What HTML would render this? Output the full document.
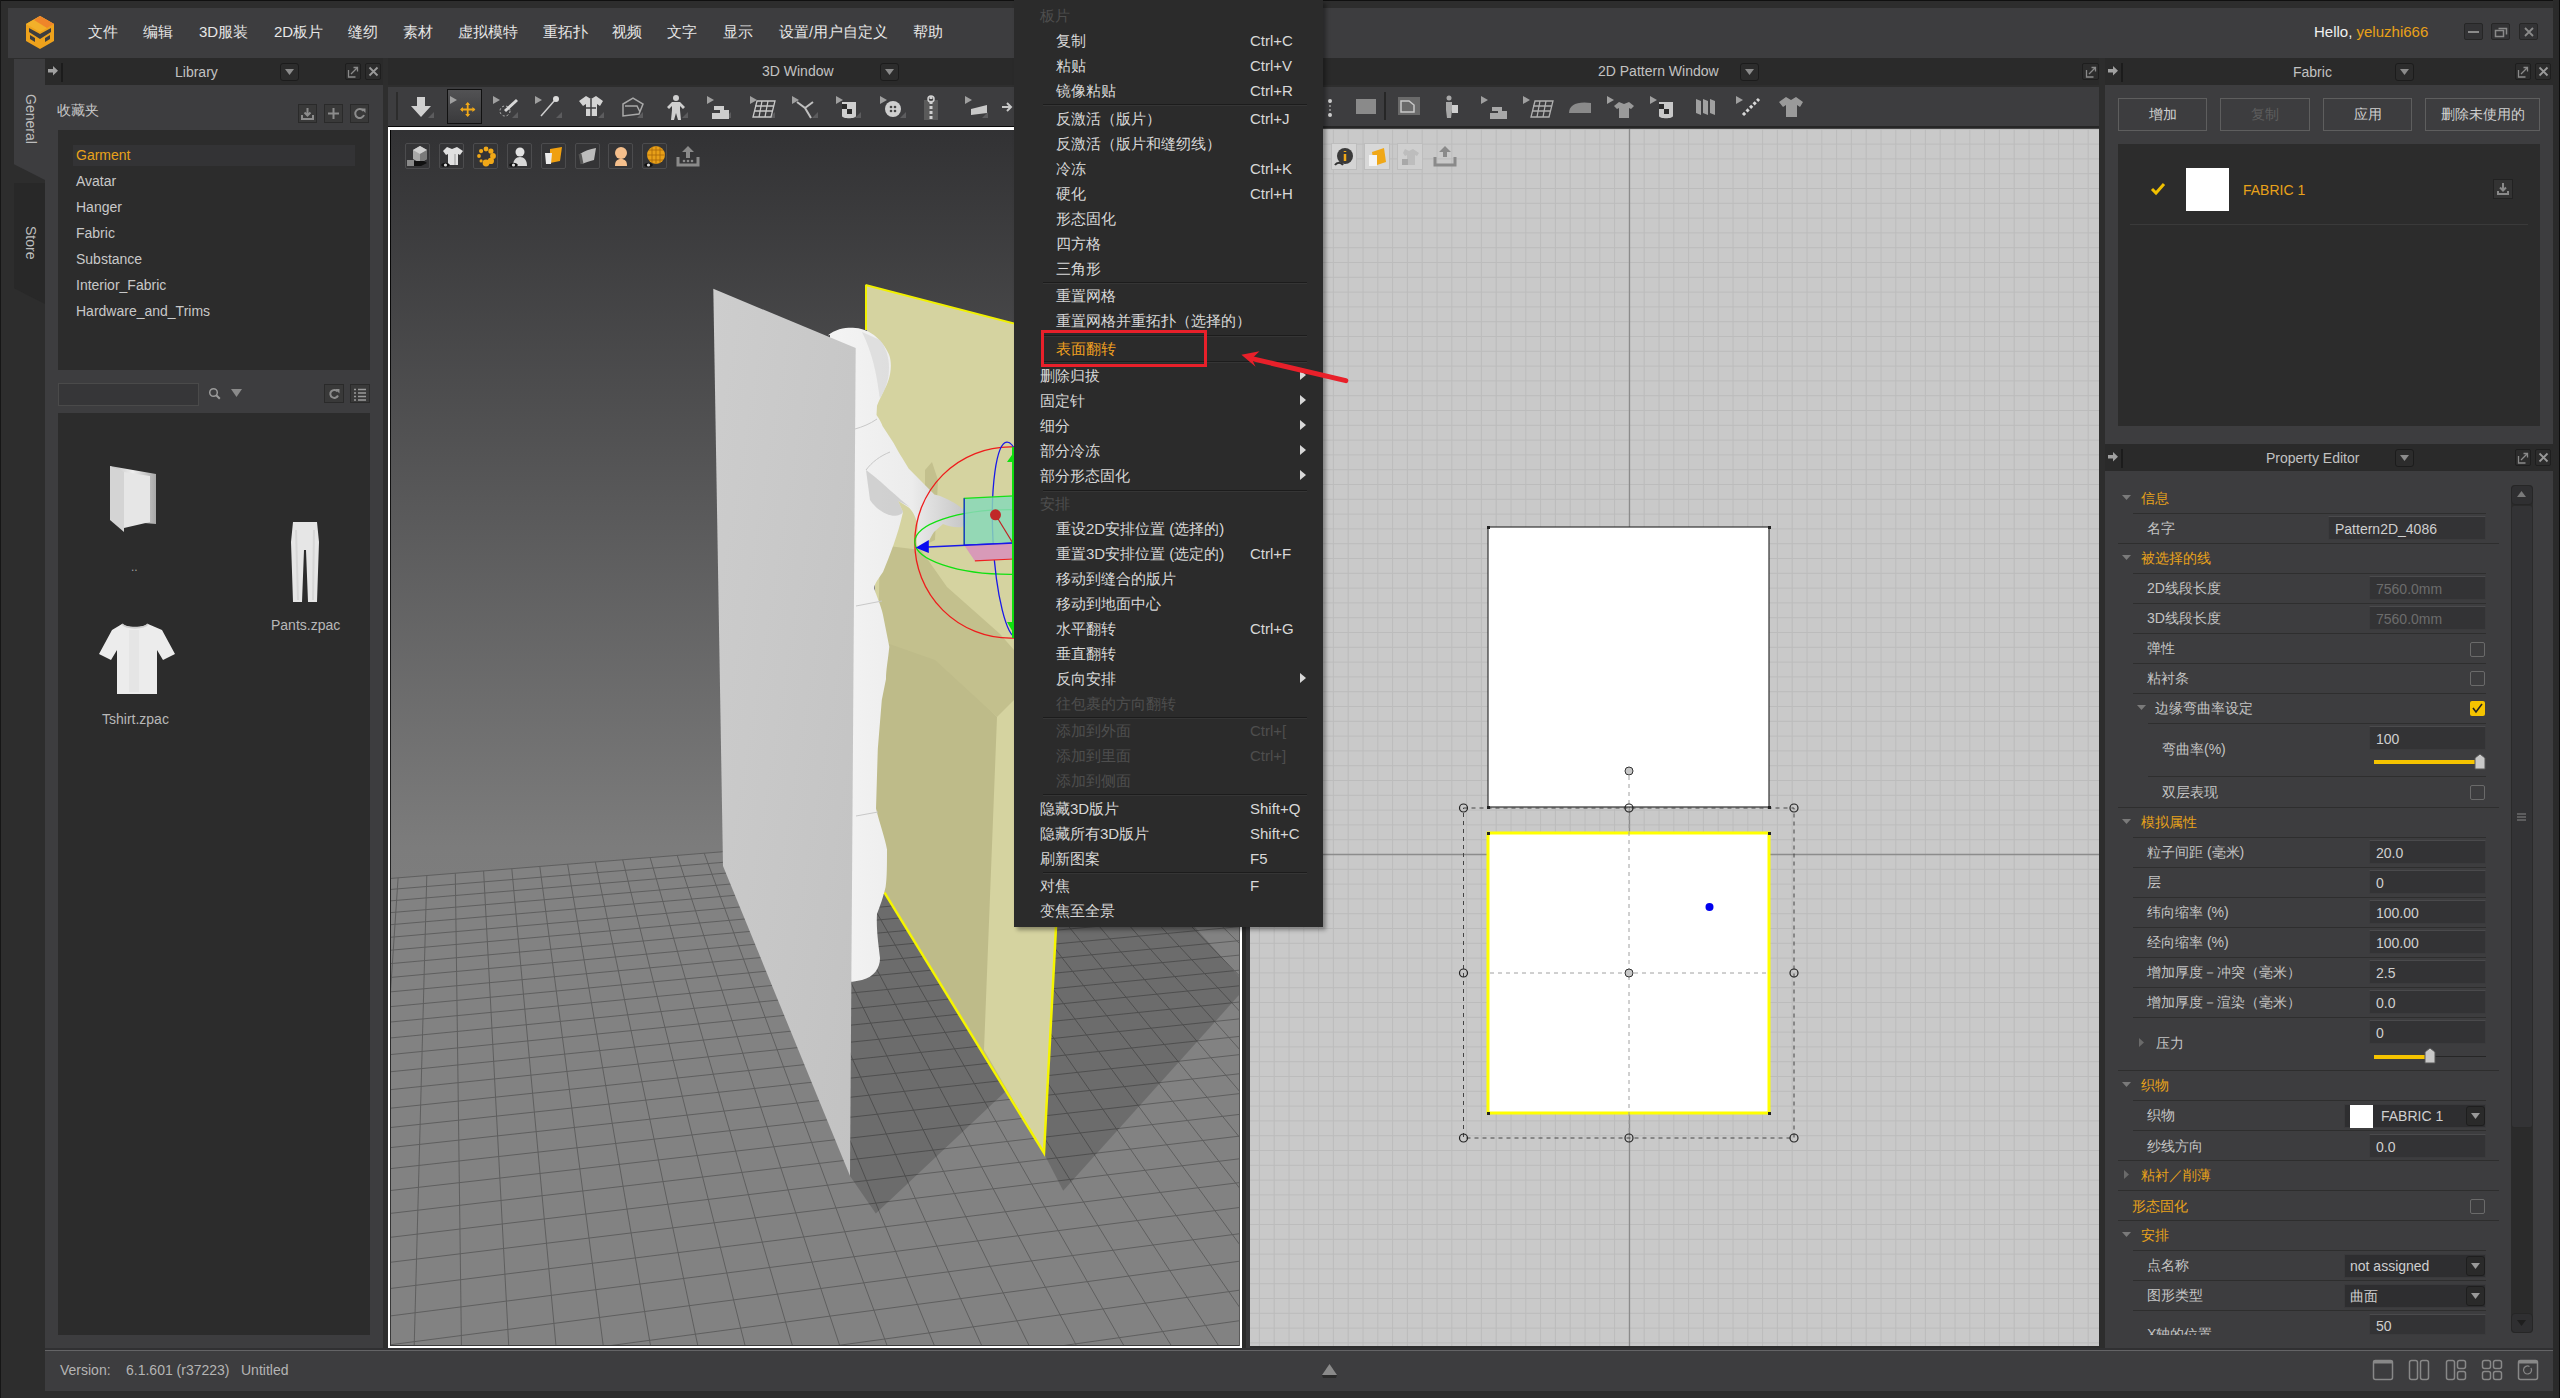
<!DOCTYPE html><html><head><meta charset="utf-8"><style>
*{box-sizing:border-box;margin:0;padding:0}
html,body{width:2560px;height:1398px;overflow:hidden;background:#2d2d2d;font-family:"Liberation Sans",sans-serif;color:#cfcfcf}
.a{position:absolute}
.t{position:absolute;white-space:nowrap;line-height:1}
svg{position:absolute;overflow:visible}
</style></head><body>
<div class="a" style="left:0px;top:0px;width:2560px;height:1px;background:#101010;"></div>
<div class="a" style="left:0px;top:0px;width:1px;height:1398px;background:#161616;"></div>
<div class="a" style="left:2553px;top:0px;width:6px;height:1398px;background:#2a2a2a;"></div>
<div class="a" style="left:2559px;top:0px;width:1px;height:1398px;background:#0e0e0e;"></div>
<div class="a" style="left:8px;top:8px;width:2545px;height:50px;background:#3d3d3f;"></div>
<div class="t" style="left:88px;top:23.5px;font-size:15px;color:#e6e6e6;">文件</div>
<div class="t" style="left:143px;top:23.5px;font-size:15px;color:#e6e6e6;">编辑</div>
<div class="t" style="left:199px;top:23.5px;font-size:15px;color:#e6e6e6;">3D服装</div>
<div class="t" style="left:274px;top:23.5px;font-size:15px;color:#e6e6e6;">2D板片</div>
<div class="t" style="left:348px;top:23.5px;font-size:15px;color:#e6e6e6;">缝纫</div>
<div class="t" style="left:403px;top:23.5px;font-size:15px;color:#e6e6e6;">素材</div>
<div class="t" style="left:458px;top:23.5px;font-size:15px;color:#e6e6e6;">虚拟模特</div>
<div class="t" style="left:543px;top:23.5px;font-size:15px;color:#e6e6e6;">重拓扑</div>
<div class="t" style="left:612px;top:23.5px;font-size:15px;color:#e6e6e6;">视频</div>
<div class="t" style="left:667px;top:23.5px;font-size:15px;color:#e6e6e6;">文字</div>
<div class="t" style="left:723px;top:23.5px;font-size:15px;color:#e6e6e6;">显示</div>
<div class="t" style="left:779px;top:23.5px;font-size:15px;color:#e6e6e6;">设置/用户自定义</div>
<div class="t" style="left:913px;top:23.5px;font-size:15px;color:#e6e6e6;">帮助</div>
<svg style="left:24px;top:15px" width="32" height="36" viewBox="0 0 32 36">
<polygon points="16,1 30,9 30,26 16,34 2,26 2,9" fill="#eea21c"/>
<polygon points="16,1 30,9 16,17 2,9" fill="#f2b02a"/>
<polygon points="16,1 30,9 23,13 10,5" fill="#ee7a2a" opacity=".8"/>
<polygon points="5,13 16,19 27,13 27,17 16,24 5,17" fill="#3d3d3f"/>
<polygon points="6,20 11,23 11,27 6,24" fill="#3d3d3f"/>
<polygon points="26,20 21,23 21,27 26,24" fill="#3d3d3f"/>
</svg>
<div class="t" style="left:2314px;top:23.5px;font-size:15px;color:#f0f0f0;">Hello, <span style="color:#e9a118">yeluzhi666</span></div>
<div class="a" style="left:2464px;top:23px;width:19px;height:17px;background:#333335;border:1px solid #262626;border-radius:2px"></div>
<div class="a" style="left:2491px;top:23px;width:19px;height:17px;background:#333335;border:1px solid #262626;border-radius:2px"></div>
<div class="a" style="left:2519px;top:23px;width:19px;height:17px;background:#333335;border:1px solid #262626;border-radius:2px"></div>
<div class="a" style="left:2468px;top:31px;width:11px;height:2px;background:#8a8a8a;"></div>
<svg style="left:2494px;top:25px" width="14" height="14"><rect x="1.5" y="5.5" width="8" height="6" fill="none" stroke="#8a8a8a" stroke-width="1.5"/><path d="M4.5 3.5h8v6" fill="none" stroke="#8a8a8a" stroke-width="1.5"/></svg>
<svg style="left:2522px;top:25px" width="14" height="14"><path d="M3 3L11 11M11 3L3 11" stroke="#8a8a8a" stroke-width="1.8"/></svg>
<div class="a" style="left:14px;top:59px;width:31px;height:121px;background:#3d3d3f;clip-path:polygon(0 0,100% 0,100% 100%,0 87%)"></div>
<div class="a" style="left:14px;top:183px;width:31px;height:121px;background:#282828;clip-path:polygon(0 0,100% 0,100% 100%,0 87%)"></div>
<div class="t" style="left:6px;top:112.0px;font-size:14px;color:#bdbdbd;transform:rotate(90deg);transform-origin:50% 50%;width:50px">General</div>
<div class="t" style="left:13px;top:237.0px;font-size:14px;color:#bdbdbd;transform:rotate(90deg);transform-origin:50% 50%;width:36px">Store</div>
<div class="a" style="left:45px;top:58px;width:338px;height:27px;background:#2a2a2a;"></div>
<svg style="left:47px;top:66px" width="14" height="12"><path d="M1 3h5V0l5 4.75-5 4.75V6.5H1z" fill="#a0a0a0"/></svg>
<div class="a" style="left:61px;top:63px;width:2px;height:19px;background:#1c1c1c;"></div>
<div class="t" style="left:175px;top:64.5px;font-size:14px;color:#c2c2c2;">Library</div>
<div class="a" style="left:280px;top:63px;width:19px;height:18px;background:#2c2c2c;border:1px solid #1c1c1c;border-radius:3px"></div>
<svg style="left:285px;top:69px" width="9" height="6"><path d="M0 0h9L4.5 6z" fill="#8c8c8c"/></svg>
<div class="a" style="left:345px;top:63px;width:16px;height:17px;background:#2c2c2c;border:1px solid #1e1e1e;border-radius:2px"></div>
<svg style="left:347px;top:66px" width="12" height="12"><path d="M1.5 4v7h7M4 8l6-6M6.5 1.5h4v4" fill="none" stroke="#8a8a8a" stroke-width="1.3"/></svg>
<div class="a" style="left:365px;top:63px;width:16px;height:17px;background:#2c2c2c;border:1px solid #1e1e1e;border-radius:2px"></div>
<svg style="left:368px;top:66px" width="11" height="11"><path d="M1.5 1.5l8 8M9.5 1.5l-8 8" stroke="#9a9a9a" stroke-width="1.8"/></svg>
<div class="a" style="left:45px;top:85px;width:338px;height:1264px;background:#3d3d3f;"></div>
<div class="a" style="left:383px;top:85px;width:5px;height:1264px;background:#2e2e2e;"></div>
<div class="t" style="left:57px;top:103.0px;font-size:14px;color:#c8c8c8;">收藏夹</div>
<div class="a" style="left:298px;top:104px;width:19px;height:19px;background:#393939;border:1px solid #2a2a2a"></div>
<div class="a" style="left:324px;top:104px;width:19px;height:19px;background:#393939;border:1px solid #2a2a2a"></div>
<div class="a" style="left:350px;top:104px;width:19px;height:19px;background:#393939;border:1px solid #2a2a2a"></div>
<svg style="left:300px;top:106px" width="15" height="15"><path d="M7.5 2v7M4.5 6.5l3 3 3-3M2 9v4h11V9" fill="none" stroke="#8c8c8c" stroke-width="2"/></svg>
<svg style="left:326px;top:106px" width="15" height="15"><path d="M7.5 2v11M2 7.5h11" stroke="#8c8c8c" stroke-width="2"/></svg>
<svg style="left:352px;top:106px" width="15" height="15"><path d="M11.5 5A4.5 4.5 0 1 0 12 9" fill="none" stroke="#8c8c8c" stroke-width="2"/><path d="M9 2.5h4.5V7z" fill="#8c8c8c"/></svg>
<div class="a" style="left:58px;top:130px;width:312px;height:240px;background:#2c2c2c;"></div>
<div class="a" style="left:73px;top:145px;width:282px;height:21px;background:#333335;"></div>
<div class="t" style="left:76px;top:148.0px;font-size:14px;color:#e8a21a;">Garment</div>
<div class="t" style="left:76px;top:174.0px;font-size:14px;color:#c8c8c8;">Avatar</div>
<div class="t" style="left:76px;top:200.0px;font-size:14px;color:#c8c8c8;">Hanger</div>
<div class="t" style="left:76px;top:226.0px;font-size:14px;color:#c8c8c8;">Fabric</div>
<div class="t" style="left:76px;top:252.0px;font-size:14px;color:#c8c8c8;">Substance</div>
<div class="t" style="left:76px;top:278.0px;font-size:14px;color:#c8c8c8;">Interior_Fabric</div>
<div class="t" style="left:76px;top:304.0px;font-size:14px;color:#c8c8c8;">Hardware_and_Trims</div>
<div class="a" style="left:58px;top:383px;width:141px;height:23px;background:#363638;border:1px solid #4a4a4a"></div>
<svg style="left:208px;top:387px" width="14" height="14"><circle cx="5.5" cy="5.5" r="3.8" fill="none" stroke="#9a9a9a" stroke-width="1.5"/><path d="M8.3 8.3l3.5 3.5" stroke="#9a9a9a" stroke-width="2"/></svg>
<svg style="left:231px;top:389px" width="12" height="9"><path d="M0 0h11L5.5 8z" fill="#8a8a8a"/></svg>
<div class="a" style="left:324px;top:384px;width:20px;height:19px;background:#393939;border:1px solid #2a2a2a"></div>
<div class="a" style="left:350px;top:384px;width:20px;height:19px;background:#393939;border:1px solid #2a2a2a"></div>
<svg style="left:327px;top:387px" width="14" height="14"><path d="M10.5 4.5A4 4 0 1 0 11 8.5" fill="none" stroke="#8c8c8c" stroke-width="2"/><path d="M8 2h4.5v4.5z" fill="#8c8c8c"/></svg>
<svg style="left:353px;top:387px" width="14" height="14"><path d="M1 2.5h2M5 2.5h8M1 6h2M5 6h8M1 9.5h2M5 9.5h8M1 13h2M5 13h8" stroke="#9a9a9a" stroke-width="1.6"/></svg>
<div class="a" style="left:58px;top:413px;width:312px;height:922px;background:#2c2c2c;"></div>
<svg style="left:108px;top:462px" width="52" height="72">
<defs><linearGradient id="fg" x1="0" x2="1"><stop offset="0" stop-color="#bdbdbd"/><stop offset=".5" stop-color="#eeeeee"/><stop offset="1" stop-color="#a8a8a8"/></linearGradient></defs>
<polygon points="2,4 48,12 48,62 2,58" fill="url(#fg)"/>
<polygon points="2,4 16,10 16,70 2,58" fill="#d4d4d4"/>
<polygon points="16,10 42,14 42,60 16,66" fill="#e6e6e6"/>
</svg>
<div class="t" style="left:131px;top:561.0px;font-size:12px;color:#a0a0a0;">..</div>
<svg style="left:288px;top:520px" width="34" height="84">
<path d="M5 2h24l2 20-2 60h-9l-2-52h-2l-2 52H5L3 22z" fill="#e6e6e6"/>
<path d="M8 10l2 70M26 10l-1 70" stroke="#d2d2d2" stroke-width="2" opacity=".7"/>
</svg>
<div class="t" style="left:271px;top:618.0px;font-size:14px;color:#b8b8b8;">Pants.zpac</div>
<svg style="left:94px;top:622px" width="82" height="72">
<path d="M28 2c4 4 22 4 26 0l14 6 13 24-12 6-6-10 0 44H23V28l-6 10-12-6L18 8z" fill="#ececec"/>
<path d="M28 2c4 5 22 5 26 0" fill="none" stroke="#cfcfcf" stroke-width="2"/>
<path d="M40 8v62" stroke="#e2e2e2" stroke-width="10" opacity=".6"/>
</svg>
<div class="t" style="left:102px;top:712.0px;font-size:14px;color:#b8b8b8;">Tshirt.zpac</div>
<div class="a" style="left:388px;top:58px;width:852px;height:27px;background:#2a2a2a;"></div>
<div class="t" style="left:762px;top:64.0px;font-size:14px;color:#c2c2c2;">3D Window</div>
<div class="a" style="left:880px;top:63px;width:19px;height:18px;background:#2c2c2c;border:1px solid #1c1c1c;border-radius:3px"></div>
<svg style="left:885px;top:69px" width="9" height="6"><path d="M0 0h9L4.5 6z" fill="#8c8c8c"/></svg>
<div class="a" style="left:388px;top:85px;width:852px;height:2px;background:#2e2e2e;"></div>
<div class="a" style="left:388px;top:87px;width:852px;height:40px;background:#3d3d3f;"></div>
<div class="a" style="left:396px;top:92px;width:2px;height:28px;background:#2c2c2c;"></div>
<div class="a" style="left:447px;top:89px;width:35px;height:35px;background:#444446;border:1px solid #111;background:linear-gradient(#525254,#3a3a3c)"></div>
<svg style="left:428px;top:112px" width="6" height="6"><path d="M6 0V6H0z" fill="#5c5c5e"/></svg>
<svg style="left:512px;top:112px" width="6" height="6"><path d="M6 0V6H0z" fill="#5c5c5e"/></svg>
<svg style="left:556px;top:112px" width="6" height="6"><path d="M6 0V6H0z" fill="#5c5c5e"/></svg>
<svg style="left:598px;top:112px" width="6" height="6"><path d="M6 0V6H0z" fill="#5c5c5e"/></svg>
<svg style="left:637px;top:112px" width="6" height="6"><path d="M6 0V6H0z" fill="#5c5c5e"/></svg>
<svg style="left:682px;top:112px" width="6" height="6"><path d="M6 0V6H0z" fill="#5c5c5e"/></svg>
<svg style="left:725px;top:112px" width="6" height="6"><path d="M6 0V6H0z" fill="#5c5c5e"/></svg>
<svg style="left:769px;top:112px" width="6" height="6"><path d="M6 0V6H0z" fill="#5c5c5e"/></svg>
<svg style="left:812px;top:112px" width="6" height="6"><path d="M6 0V6H0z" fill="#5c5c5e"/></svg>
<svg style="left:855px;top:112px" width="6" height="6"><path d="M6 0V6H0z" fill="#5c5c5e"/></svg>
<svg style="left:900px;top:112px" width="6" height="6"><path d="M6 0V6H0z" fill="#5c5c5e"/></svg>
<svg style="left:982px;top:112px" width="6" height="6"><path d="M6 0V6H0z" fill="#5c5c5e"/></svg>
<svg style="left:409px;top:96px" width="24" height="22"><path d="M8 1h8v9h6L12 21 2 10h6z" fill="#d0d0d0"/></svg>
<svg style="left:460px;top:102px" width="16" height="16"><path d="M7.7 1v13M1 7.5h13.4" stroke="#f0a818" stroke-width="1.8"/><path d="M7.7 0l-2.5 3h5zM7.7 15l-2.5-3h5zM0 7.5l3-2.5v5zM15.4 7.5l-3-2.5v5z" fill="#f0a818"/></svg>
<svg style="left:450px;top:96px" width="8" height="9"><path d="M0 0v8l7-4z" fill="#a0a0a0"/></svg>
<svg style="left:493px;top:96px" width="8" height="9"><path d="M0 0v8l7-4z" fill="#a0a0a0"/></svg>
<svg style="left:535px;top:96px" width="8" height="9"><path d="M0 0v8l7-4z" fill="#a0a0a0"/></svg>
<svg style="left:707px;top:96px" width="8" height="9"><path d="M0 0v8l7-4z" fill="#a0a0a0"/></svg>
<svg style="left:750px;top:96px" width="8" height="9"><path d="M0 0v8l7-4z" fill="#a0a0a0"/></svg>
<svg style="left:792px;top:96px" width="8" height="9"><path d="M0 0v8l7-4z" fill="#a0a0a0"/></svg>
<svg style="left:836px;top:96px" width="8" height="9"><path d="M0 0v8l7-4z" fill="#a0a0a0"/></svg>
<svg style="left:880px;top:96px" width="8" height="9"><path d="M0 0v8l7-4z" fill="#a0a0a0"/></svg>
<svg style="left:965px;top:96px" width="8" height="9"><path d="M0 0v8l7-4z" fill="#a0a0a0"/></svg>
<svg style="left:497px;top:96px" width="24" height="24"><circle cx="8" cy="15" r="5" fill="none" stroke="#b8b8b8" stroke-dasharray="2 2"/><path d="M8 15L20 4" stroke="#d8d8d8" stroke-width="3"/></svg>
<svg style="left:537px;top:94px" width="24" height="26"><path d="M4 22L18 6" stroke="#cfcfcf" stroke-width="1.5"/><circle cx="19" cy="5" r="3" fill="#dcdcdc"/></svg>
<svg style="left:578px;top:95px" width="26" height="24"><path d="M8 1l5 3 5-3 7 5-3 5-3-2v12H8V9L5 11 1 6z" fill="#d4d4d4"/><path d="M13 4v18M8 13h10" stroke="#3d3d3f" stroke-width="1.5"/></svg>
<svg style="left:621px;top:96px" width="24" height="22"><path d="M2 20V8l10-6 10 6-4 10zM4 10h12l3 6" fill="none" stroke="#a8a8a8" stroke-width="1.5"/></svg>
<svg style="left:665px;top:94px" width="22" height="26"><circle cx="11" cy="4" r="3" fill="#cfcfcf"/><path d="M7 8h8l5 5-2 2-3-3v4l1 10h-3l-2-7-2 7H6l1-10v-4l-3 3-2-2z" fill="#cfcfcf"/></svg>
<svg style="left:709px;top:98px" width="22" height="22"><path d="M5 8h10v4h5v9H3v-6h8v-3H5z" fill="#cdcdcd"/></svg>
<svg style="left:752px;top:100px" width="24" height="18"><path d="M5 1h18l-4 16H1zM3 6h19M2 11h19M10 1l-3 16M16 1l-3 16" fill="none" stroke="#c8c8c8" stroke-width="1.3"/></svg>
<svg style="left:795px;top:98px" width="22" height="22"><path d="M2 4l8 6 6 10M10 10l8-6" fill="none" stroke="#c0c0c0" stroke-width="2"/></svg>
<svg style="left:838px;top:96px" width="22" height="24"><path d="M4 6h14v14c0 3-14 3-14 0z" fill="#cfcfcf"/><path d="M4 8h5v5H4zM9 13h5v5H9z" fill="#2a2a2a"/></svg>
<svg style="left:882px;top:98px" width="22" height="22"><circle cx="11" cy="11" r="8" fill="#cfcfcf"/><circle cx="9" cy="9" r="1.3" fill="#444"/><circle cx="13" cy="9" r="1.3" fill="#444"/><circle cx="9" cy="13" r="1.3" fill="#444"/><circle cx="13" cy="13" r="1.3" fill="#444"/></svg>
<svg style="left:921px;top:94px" width="20" height="28"><rect x="3" y="6" width="14" height="20" fill="#5a5a5a"/><path d="M10 2v24" stroke="#d0d0d0" stroke-width="3" stroke-dasharray="3 2"/><circle cx="10" cy="5" r="3" fill="none" stroke="#d0d0d0" stroke-width="1.5"/></svg>
<svg style="left:967px;top:97px" width="24" height="22"><path d="M4 12l16-4v8L4 18z" fill="#c8c8c8"/></svg>
<svg style="left:1001px;top:101px" width="14" height="12"><path d="M1 6h8M6 2l4 4-4 4" fill="none" stroke="#c8c8c8" stroke-width="2"/></svg>
<div class="a" style="left:388px;top:126px;width:853px;height:1px;background:#0a0a0a;"></div>
<div class="a" style="left:388px;top:127px;width:854px;height:1221px;background:#ffffff;"></div>
<div class="a" style="left:390px;top:130px;width:1px;height:1216px;background:#050505;background:linear-gradient(#000,#3a3a3a)"></div>
<div class="a" style="left:390px;top:1345px;width:850px;height:1px;background:#3a3a3a;"></div>
<div class="a" style="left:1239px;top:130px;width:1px;height:1216px;background:#5a5a5a;"></div>
<svg style="left:391px;top:130px" width="848" height="1215" viewBox="1 0 848 1215">
<defs>
<linearGradient id="bg3" x1="0" y1="0" x2="0" y2="1"><stop offset="0" stop-color="#323234"/><stop offset=".59" stop-color="#7c7c7c"/><stop offset="1" stop-color="#8a8a8a"/></linearGradient>
<clipPath id="vc"><rect x="1" y="0" width="848" height="1215"/></clipPath>
<linearGradient id="gp" x1="0" y1="0" x2="1" y2="1"><stop offset="0" stop-color="#cdcdcd"/><stop offset="1" stop-color="#c2c2c2"/></linearGradient>
<linearGradient id="av" x1="0" y1="0" x2="1" y2="0"><stop offset="0" stop-color="#f4f4f4"/><stop offset=".6" stop-color="#ececec"/><stop offset="1" stop-color="#c4c4c4"/></linearGradient>
</defs>
<g clip-path="url(#vc)">
<rect x="0" y="0" width="849" height="1215" fill="url(#bg3)"/>
<polygon points="-49.8,752.5 1483.3,629.2 2761.3,1167.6 -187.7,1696.2" fill="#828282"/>
<path d="M-187.7 1696.2L-49.8 752.5M-120.1 1684.1L-20.8 750.1M-53.4 1672.1L8.1 747.8M12.3 1660.4L36.8 745.5M77.1 1648.8L65.3 743.2M141.0 1637.3L93.6 740.9M204.0 1626.0L121.8 738.7M266.1 1614.9L149.8 736.4M327.4 1603.9L177.6 734.2M387.8 1593.0L205.3 731.9M447.5 1582.4L232.7 729.7M506.3 1571.8L260.1 727.5M564.4 1561.4L287.2 725.4M621.7 1551.1L314.2 723.2M678.2 1541.0L341.0 721.0M734.0 1531.0L367.7 718.9M789.1 1521.1L394.2 716.8M843.5 1511.4L420.5 714.6M897.2 1501.7L446.7 712.5M950.2 1492.2L472.8 710.5M1002.5 1482.9L498.6 708.4M1054.2 1473.6L524.4 706.3M1105.2 1464.4L549.9 704.2M1155.6 1455.4L575.4 702.2M1205.4 1446.5L600.7 700.2M1254.6 1437.7L625.8 698.2M1303.1 1429.0L650.8 696.1M1351.1 1420.4L675.6 694.1M1398.5 1411.9L700.3 692.2M1445.4 1403.5L724.9 690.2M1491.7 1395.2L749.3 688.2M1537.4 1387.0L773.6 686.3M1582.6 1378.9L797.7 684.3M1627.3 1370.9L821.7 682.4M1671.4 1362.9L845.6 680.5M1715.1 1355.1L869.3 678.6M1758.2 1347.4L892.9 676.7M1800.9 1339.7L916.4 674.8M1843.1 1332.2L939.7 672.9M1884.8 1324.7L962.9 671.1M1926.0 1317.3L986.0 669.2M1966.8 1310.0L1008.9 667.4M2007.1 1302.8L1031.7 665.5M2047.0 1295.6L1054.4 663.7M2086.4 1288.6L1077.0 661.9M2125.4 1281.6L1099.4 660.1M2164.0 1274.7L1121.8 658.3M2202.2 1267.8L1144.0 656.5M2239.9 1261.0L1166.0 654.7M2277.3 1254.3L1188.0 653.0M2314.2 1247.7L1209.8 651.2M2350.8 1241.2L1231.6 649.5M2387.0 1234.7L1253.2 647.7M2422.8 1228.3L1274.6 646.0M2458.2 1221.9L1296.0 644.3M2493.3 1215.6L1317.3 642.6M2528.0 1209.4L1338.4 640.9M2562.4 1203.2L1359.4 639.2M2596.4 1197.1L1380.4 637.5M2630.0 1191.1L1401.2 635.8M2663.4 1185.1L1421.9 634.2M2696.3 1179.2L1442.5 632.5M2729.0 1173.4L1462.9 630.9M-187.7 1696.2L2761.3 1167.6M-179.4 1639.5L2697.4 1140.6M-171.7 1586.5L2636.4 1115.0M-164.4 1536.8L2578.2 1090.4M-157.6 1490.3L2522.6 1067.0M-151.2 1446.5L2469.3 1044.6M-145.2 1405.3L2418.3 1023.1M-139.5 1366.4L2369.4 1002.5M-134.1 1329.6L2322.5 982.7M-129.1 1294.8L2277.5 963.8M-124.2 1261.8L2234.2 945.5M-119.7 1230.5L2192.6 928.0M-115.3 1200.7L2152.5 911.1M-111.2 1172.4L2113.9 894.9M-107.2 1145.4L2076.7 879.2M-103.5 1119.7L2040.8 864.1M-99.9 1095.1L2006.2 849.5M-96.5 1071.6L1972.8 835.4M-93.2 1049.1L1940.5 821.8M-90.0 1027.5L1909.2 808.6M-87.0 1006.9L1879.0 795.9M-84.1 987.1L1849.8 783.6M-81.3 968.1L1821.4 771.7M-78.7 949.8L1794.0 760.1M-76.1 932.2L1767.4 748.9M-73.6 915.2L1741.6 738.0M-71.2 898.9L1716.5 727.5M-68.9 883.2L1692.2 717.2M-66.7 868.1L1668.6 707.3M-64.6 853.4L1645.7 697.6M-62.5 839.3L1623.4 688.2M-60.5 825.6L1601.7 679.1M-58.6 812.4L1580.7 670.2M-56.7 799.6L1560.1 661.6M-54.9 787.3L1540.2 653.2M-53.2 775.3L1520.7 645.0M-51.5 763.7L1501.8 637.0M-49.8 752.5L1483.3 629.2" stroke="#5f5f5f" stroke-width="1" fill="none"/>
<polygon points="450.0,715.0 494.0,715.0 494.5,762.7 616.0,961.0 485.8,1083.4 460.0,1046.0 450.0,1020.0" fill="#000" opacity=".17"/>
<polygon points="666.0,750.0 804.8,797.0 850.0,848.0 850.0,864.0 673.2,1060.7 653.7,1023.0" fill="#000" opacity=".17"/>
<!-- yellow plane -->
<polygon points="475.5,155.0 630.0,195.0 666.0,797.0 654.0,1023.0 494.5,762.7" fill="#d5d3a0"/>
<polygon points="486.0,510.0 545.0,525.0 607.0,587.0 594.0,920.0 654.0,1023.0 494.5,762.7 486.0,760.0" fill="#bebb89"/>
<polygon points="490.0,415.0 531.0,420.0 557.0,457.0 583.0,480.0 610.0,504.0 624.0,520.0 624.0,570.0 607.0,587.0 545.0,530.0 488.0,510.0" fill="#c3c08d"/>
<polygon points="535.0,340.0 542.0,332.0 548.0,350.0 545.0,410.0 535.0,415.0" fill="#c3c08d"/>
<polyline points="475.5,155.0 630.0,195.0" stroke="#f0f000" stroke-width="2" fill="none"/>
<polyline points="476.0,155.0 476.0,200.0" stroke="#f0f000" stroke-width="2" fill="none"/>
<polyline points="494.5,762.7 654.0,1023.0 666.0,797.0" stroke="#f5f500" stroke-width="2.5" fill="none"/>
<!-- avatar -->
<path d="M 437.7 205.6 C 445.0 199.0 455.0 197.5 462.8 197.7 C 478.0 198.0 492.0 208.0 499.0 224.6 C 502.0 232.0 501.0 242.0 498.6 249.8 C 496.0 258.0 490.0 268.0 487.0 275.8 L 486.5 285.0 C 490.0 290.0 492.0 294.0 492.5 296.0 L 503.6 313.0 C 510.0 325.0 515.0 332.0 518.6 338.6 L 544.4 364.4 C 552.0 366.0 560.0 370.0 566.0 374.0 L 576.0 381.0 C 580.0 386.0 578.0 394.0 572.0 397.0 C 565.0 398.0 558.0 396.0 553.0 394.0 L 544.0 402.0 C 540.0 408.0 537.0 416.0 533.0 420.0 C 528.0 420.0 526.0 415.0 527.0 408.0 L 528.0 395.0 C 525.0 385.0 522.0 380.0 518.0 377.0 L 508.0 370.8 L 513.0 382.0 C 508.0 405.0 500.0 425.0 493.0 442.0 C 486.0 452.0 484.0 455.0 484.3 458.8 C 488.0 470.0 491.0 476.0 492.9 484.5 L 499.3 516.7 C 498.0 530.0 496.0 540.0 496.0 548.9 L 491.8 570.0 L 487.8 619.0 L 486.0 678.6 C 490.0 695.0 495.0 708.0 497.0 719.5 C 497.0 735.0 497.0 748.0 495.6 757.0 C 493.0 768.0 490.0 776.0 487.0 784.0 C 486.0 800.0 489.0 818.0 490.0 828.0 C 490.0 838.0 484.0 847.0 472.0 850.0 L 462.6 851.7 L 440.0 851.0 L 440.0 205.0 Z" fill="url(#av)"/>
<path d="M 487.0 289.0 C 480.0 294.0 472.0 297.0 465.0 299.0 M 500.0 322.0 C 490.0 326.0 482.0 332.0 476.0 340.0 M 492.0 471.0 L 466.0 476.0 M 488.0 682.0 L 466.0 686.0" stroke="#c8c8c8" stroke-width="1" fill="none"/>
<path d="M 490.0 210.0 C 502.0 225.0 502.0 250.0 490.0 268.0 C 488.0 258.0 486.0 230.0 472.0 202.0 Z" fill="#d4d4d4" opacity=".6"/>
<path d="M 476.0 340.0 C 490.0 350.0 510.0 370.0 520.0 377.0 L 508.0 370.8 L 513.0 382.0 C 508.0 390.0 490.0 385.0 480.0 370.0 Z" fill="#bdbdbd" opacity=".6"/>
<!-- grey plane -->
<polygon points="323.3,158.8 465.7,218.0 460.0,1046.0 333.0,736.0" fill="url(#gp)"/>
<!-- gizmo -->
<circle cx="620.4" cy="412.5" r="95.6" fill="none" stroke="#ee1c1c" stroke-width="1.3"/>
<ellipse cx="620.4" cy="412.0" rx="95.6" ry="32.4" fill="none" stroke="#10e010" stroke-width="1.3"/>
<ellipse cx="622.0" cy="410.0" rx="19" ry="98" fill="none" stroke="#1818e8" stroke-width="1.3" transform="rotate(-3 622.0 410.0)"/>
<polygon points="574.2,368.3 624.0,365.8 624.0,415.0 574.2,415.2" fill="#88d8b8" opacity=".85"/>
<polyline points="574.2,415.2 574.2,368.3 624.0,365.8" stroke="#18e018" stroke-width="1.2" fill="none"/>
<polyline points="574.2,368.3 574.2,415.2 624.0,413.0" stroke="#1818e8" stroke-width="1.2" fill="none"/>
<polygon points="574.2,415.2 624.0,413.0 624.0,429.0 584.9,430.9" fill="#d89ab8"/>
<polyline points="584.9,430.9 624.0,429.0" stroke="#ee2020" stroke-width="1.2" fill="none"/>
<path d="M 605.5 384.8 L 624.0 415.0" stroke="#c02020" stroke-width="1.2"/>
<circle cx="605.5" cy="384.8" r="5.5" fill="#c02828"/>
<path d="M 538.0 417.0 L 624.0 413.0" stroke="#1818e8" stroke-width="1.5"/>
<polygon points="525.7,417.7 538.8,410.0 538.8,423.0" fill="#0a0af0"/>
<path d="M 623.0 317.0 L 623.0 508.0" stroke="#10e010" stroke-width="2"/>
<polygon points="624.0,322.0 617.0,332.0 624.0,332.0" fill="#10e010"/>
<polygon points="624.0,504.0 617.0,492.0 624.0,492.0" fill="#10e010"/>
</g>
</svg>
<div class="a" style="left:405px;top:143px;width:25px;height:26px;background:#343436;border:1px solid #4c4c4e;border-radius:2px"></div>
<div class="a" style="left:439px;top:143px;width:25px;height:26px;background:#343436;border:1px solid #4c4c4e;border-radius:2px"></div>
<div class="a" style="left:473px;top:143px;width:25px;height:26px;background:#343436;border:1px solid #4c4c4e;border-radius:2px"></div>
<div class="a" style="left:507px;top:143px;width:25px;height:26px;background:#343436;border:1px solid #4c4c4e;border-radius:2px"></div>
<div class="a" style="left:541px;top:143px;width:25px;height:26px;background:#343436;border:1px solid #4c4c4e;border-radius:2px"></div>
<div class="a" style="left:575px;top:143px;width:25px;height:26px;background:#343436;border:1px solid #4c4c4e;border-radius:2px"></div>
<div class="a" style="left:608px;top:143px;width:25px;height:26px;background:#343436;border:1px solid #4c4c4e;border-radius:2px"></div>
<div class="a" style="left:642px;top:143px;width:25px;height:26px;background:#343436;border:1px solid #4c4c4e;border-radius:2px"></div>
<svg style="left:406px;top:144px" width="24" height="24"><path d="M7 6l7-4 7 4v9l-7 4-7-4z" fill="#a8a8a8"/><path d="M7 6l7 4 7-4-7-4z" fill="#d0d0d0"/><path d="M14 10v9l7-4V6z" fill="#7a7a7a"/><path d="M2 20l6-3h10l3 2-6 3H4z" fill="#111"/><path d="M1 16h7v6H1z" fill="#8a8a8a"/></svg>
<svg style="left:440px;top:144px" width="24" height="24"><path d="M7 3l5 2 5-2 6 4-3 4-2-1v11H8V10l-2 1-3-4z" fill="#e0e0e0"/><path d="M15 10v11" stroke="#bdbdbd" stroke-width="2"/><path d="M1 21c2-3 7-3 9 0c-2 3-7 3-9 0z" fill="#111"/><circle cx="5.5" cy="21" r="1.6" fill="#ddd"/></svg>
<svg style="left:474px;top:144px" width="24" height="24"><circle cx="7.1" cy="16.9" r="1.6" fill="#f0a818"/><circle cx="5.0" cy="12.0" r="1.9" fill="#f0a818"/><circle cx="7.1" cy="7.1" r="2.1" fill="#f0a818"/><circle cx="12.0" cy="5.0" r="2.4" fill="#f0a818"/><circle cx="16.9" cy="7.1" r="2.6" fill="#f0a818"/><circle cx="19.0" cy="12.0" r="2.9" fill="#f0a818"/><circle cx="16.9" cy="16.9" r="3.1" fill="#f0a818"/><circle cx="12.0" cy="19.0" r="3.4" fill="#f0a818"/></svg>
<svg style="left:508px;top:144px" width="24" height="24"><circle cx="12" cy="8" r="4.5" fill="#e2e2e2"/><path d="M5 22c0-6 3-9 7-9s7 3 7 9z" fill="#d8d8d8"/><path d="M1 21c2-3 7-3 9 0c-2 3-7 3-9 0z" fill="#111"/><circle cx="5.5" cy="21" r="1.6" fill="#ddd"/></svg>
<svg style="left:542px;top:144px" width="24" height="24"><path d="M8 5l12-2-2 14-10 2z" fill="#f0a010"/><path d="M3 9h7l-1 11H4z" fill="#ececec"/></svg>
<svg style="left:576px;top:144px" width="24" height="24"><path d="M4 10c4-3 10-5 16-6l-2 12c-5 1-9 3-12 4z" fill="#bcbcbc"/><path d="M4 10l2 10" stroke="#555" stroke-width="3"/></svg>
<svg style="left:609px;top:144px" width="24" height="24"><circle cx="12" cy="9" r="6" fill="#f5bf8c"/><path d="M6 22c0-5 2-7 6-7s6 2 6 7z" fill="#f5bf8c"/></svg>
<svg style="left:643px;top:144px" width="24" height="24"><circle cx="13" cy="11" r="9" fill="#e8a018"/><path d="M4 11h18M13 2v18M6 6h14M6 16h14M9 3v16M17 3v16" stroke="#a86808" stroke-width=".8" fill="none"/><path d="M1 21c2-3 7-3 9 0c-2 3-7 3-9 0z" fill="#111"/><circle cx="5.5" cy="21" r="1.6" fill="#ddd"/></svg>
<svg style="left:676px;top:145px" width="24" height="22"><path d="M12 1l6 6h-4v6h-4V7H6z" fill="#8a8a8a"/><path d="M2 12v8h20v-8" fill="none" stroke="#8a8a8a" stroke-width="3"/><circle cx="8" cy="16" r="1.3" fill="#8a8a8a"/><circle cx="12" cy="16" r="1.3" fill="#8a8a8a"/><circle cx="16" cy="16" r="1.3" fill="#8a8a8a"/></svg>
<div class="a" style="left:1242px;top:58px;width:8px;height:1290px;background:#2a2a2a;"></div>
<div class="a" style="left:1246px;top:87px;width:4px;height:1261px;background:#363638;"></div>
<div class="a" style="left:1250px;top:58px;width:849px;height:27px;background:#2a2a2a;"></div>
<div class="t" style="left:1598px;top:64.0px;font-size:14px;color:#c2c2c2;">2D Pattern Window</div>
<div class="a" style="left:1740px;top:63px;width:19px;height:18px;background:#2c2c2c;border:1px solid #1c1c1c;border-radius:3px"></div>
<svg style="left:1745px;top:69px" width="9" height="6"><path d="M0 0h9L4.5 6z" fill="#8c8c8c"/></svg>
<div class="a" style="left:2082px;top:63px;width:17px;height:17px;background:#2c2c2c;border:1px solid #1e1e1e;border-radius:2px"></div>
<svg style="left:2085px;top:66px" width="12" height="12"><path d="M1.5 4v7h7M4 8l6-6M6.5 1.5h4v4" fill="none" stroke="#8a8a8a" stroke-width="1.3"/></svg>
<div class="a" style="left:1250px;top:85px;width:849px;height:2px;background:#2e2e2e;"></div>
<div class="a" style="left:1250px;top:87px;width:849px;height:39px;background:#3d3d3f;"></div>
<div class="a" style="left:1250px;top:126px;width:849px;height:3px;background:#262626;"></div>
<div class="a" style="left:1384px;top:92px;width:2px;height:28px;background:#262626;"></div>
<svg style="left:1355px;top:98px" width="22" height="18"><rect x="1" y="1" width="20" height="15" fill="#8a8a8a"/></svg>
<svg style="left:1397px;top:96px" width="24" height="20"><rect x="1" y="1" width="22" height="18" fill="#6a6a6a"/><path d="M4 16V5h8l5 4v7z" fill="none" stroke="#c8c8c8" stroke-width="1.5"/></svg>
<svg style="left:1440px;top:95px" width="24" height="24"><circle cx="9" cy="3" r="2.5" fill="#a8a8a8"/><path d="M6 7h6v8l-1 8H7l-1-8z" fill="#a8a8a8"/><rect x="12" y="10" width="6" height="8" fill="#d0d0d0"/></svg>
<svg style="left:1481px;top:96px" width="8" height="9"><path d="M0 0v8l7-4z" fill="#a0a0a0"/></svg>
<svg style="left:1523px;top:96px" width="8" height="9"><path d="M0 0v8l7-4z" fill="#a0a0a0"/></svg>
<svg style="left:1607px;top:96px" width="8" height="9"><path d="M0 0v8l7-4z" fill="#a0a0a0"/></svg>
<svg style="left:1650px;top:96px" width="8" height="9"><path d="M0 0v8l7-4z" fill="#a0a0a0"/></svg>
<svg style="left:1736px;top:96px" width="8" height="9"><path d="M0 0v8l7-4z" fill="#a0a0a0"/></svg>
<svg style="left:1487px;top:100px" width="22" height="20"><path d="M5 7h10v4h5v8H3v-6h8v-2H5z" fill="#a8a8a8"/></svg>
<svg style="left:1530px;top:100px" width="24" height="18"><path d="M5 1h18l-4 16H1zM3 6h19M2 11h19M10 1l-3 16M16 1l-3 16" fill="none" stroke="#b0b0b0" stroke-width="1.3"/></svg>
<svg style="left:1567px;top:97px" width="26" height="20"><path d="M2 16c0-8 8-12 22-10v10z" fill="#8a8a8a"/></svg>
<svg style="left:1613px;top:100px" width="22" height="20"><path d="M6 2l5 2 5-2 5 4-3 3-2-1v10H6V8L4 9 1 6z" fill="#9a9a9a"/></svg>
<svg style="left:1655px;top:96px" width="22" height="24"><path d="M4 6h14v14c0 3-14 3-14 0z" fill="#c8c8c8"/><path d="M4 8h5v5H4zM9 13h5v5H9z" fill="#2a2a2a"/></svg>
<svg style="left:1694px;top:97px" width="24" height="20"><path d="M2 2l5 2v14l-5-2zM9 2l5 2v14l-5-2zM16 2l5 2v14l-5-2z" fill="#a0a0a0"/></svg>
<svg style="left:1740px;top:96px" width="22" height="22"><path d="M3 19L19 3" stroke="#d8d8d8" stroke-width="3" stroke-dasharray="3 2"/></svg>
<svg style="left:1778px;top:96px" width="26" height="22"><path d="M8 1l5 3 5-3 7 5-3 5-3-2v12H8V9L5 11 1 6z" fill="#9a9a9a"/></svg>
<svg style="left:1325px;top:98px" width="12" height="22"><circle cx="5" cy="3" r="2" fill="#ccc"/><circle cx="5" cy="17" r="2" fill="#ccc"/><path d="M5 3v14" stroke="#ccc" stroke-dasharray="2 2"/></svg>
<svg style="left:1250px;top:129px" width="849" height="1217" viewBox="0 0 849 1217">
<rect width="849" height="1217" fill="#c9c9c9"/>
<path d="M9.4 0V1217M24.2 0V1217M39.0 0V1217M53.8 0V1217M68.6 0V1217M83.4 0V1217M98.2 0V1217M113.0 0V1217M127.8 0V1217M142.6 0V1217M157.4 0V1217M172.2 0V1217M187.0 0V1217M201.8 0V1217M216.6 0V1217M231.4 0V1217M246.2 0V1217M261.0 0V1217M275.8 0V1217M290.6 0V1217M305.4 0V1217M320.2 0V1217M335.0 0V1217M349.8 0V1217M364.6 0V1217M379.4 0V1217M394.2 0V1217M409.0 0V1217M423.8 0V1217M438.6 0V1217M453.4 0V1217M468.2 0V1217M483.0 0V1217M497.8 0V1217M512.6 0V1217M527.4 0V1217M542.2 0V1217M557.0 0V1217M571.8 0V1217M586.6 0V1217M601.4 0V1217M616.2 0V1217M631.0 0V1217M645.8 0V1217M660.6 0V1217M675.4 0V1217M690.2 0V1217M705.0 0V1217M719.8 0V1217M734.6 0V1217M749.4 0V1217M764.2 0V1217M779.0 0V1217M793.8 0V1217M808.6 0V1217M823.4 0V1217M838.2 0V1217M0 0.3H849M0 15.1H849M0 29.9H849M0 44.7H849M0 59.5H849M0 74.3H849M0 89.1H849M0 103.9H849M0 118.7H849M0 133.5H849M0 148.3H849M0 163.1H849M0 177.9H849M0 192.7H849M0 207.5H849M0 222.3H849M0 237.1H849M0 251.9H849M0 266.7H849M0 281.5H849M0 296.3H849M0 311.1H849M0 325.9H849M0 340.7H849M0 355.5H849M0 370.3H849M0 385.1H849M0 399.9H849M0 414.7H849M0 429.5H849M0 444.3H849M0 459.1H849M0 473.9H849M0 488.7H849M0 503.5H849M0 518.3H849M0 533.1H849M0 547.9H849M0 562.7H849M0 577.5H849M0 592.3H849M0 607.1H849M0 621.9H849M0 636.7H849M0 651.5H849M0 666.3H849M0 681.1H849M0 695.9H849M0 710.7H849M0 725.5H849M0 740.3H849M0 755.1H849M0 769.9H849M0 784.7H849M0 799.5H849M0 814.3H849M0 829.1H849M0 843.9H849M0 858.7H849M0 873.5H849M0 888.3H849M0 903.1H849M0 917.9H849M0 932.7H849M0 947.5H849M0 962.3H849M0 977.1H849M0 991.9H849M0 1006.7H849M0 1021.5H849M0 1036.3H849M0 1051.1H849M0 1065.9H849M0 1080.7H849M0 1095.5H849M0 1110.3H849M0 1125.1H849M0 1139.9H849M0 1154.7H849M0 1169.5H849M0 1184.3H849M0 1199.1H849M0 1213.9H849" stroke="#bcbcbc" stroke-width="1" fill="none"/>
<path d="M379.5 0V1217M0 725.5H849" stroke="#8c8c8c" stroke-width="1.3"/>
<rect x="238" y="398" width="281" height="280" fill="#fff" stroke="#333" stroke-width="1.2"/>
<rect x="238" y="704" width="281" height="280" fill="#fff" stroke="#ffff00" stroke-width="3"/>
<path d="M379 647V1009M240 844H517" stroke="#a0a0a0" stroke-dasharray="4 4" fill="none"/>
<rect x="213.5" y="679" width="330.5" height="330" fill="none" stroke="#444" stroke-dasharray="4 4"/>
<g fill="none" stroke="#222" stroke-width="1.2">
<circle cx="213.5" cy="679" r="4"/><circle cx="379" cy="679" r="4"/><circle cx="544" cy="679" r="4"/>
<circle cx="213.5" cy="844" r="4"/><circle cx="544" cy="844" r="4"/>
<circle cx="213.5" cy="1009" r="4"/><circle cx="379" cy="1009" r="4"/><circle cx="544" cy="1009" r="4"/>
</g>
<circle cx="379" cy="844" r="4" fill="#c8c8c8" stroke="#333"/>
<circle cx="379" cy="642" r="4" fill="#c8c8c8" stroke="#333"/>
<g fill="#222"><rect x="237" y="397" width="3" height="3"/><rect x="518" y="397" width="3" height="3"/><rect x="237" y="677" width="3" height="3"/><rect x="518" y="677" width="3" height="3"/>
<rect x="237" y="703" width="3" height="3"/><rect x="518" y="703" width="3" height="3"/><rect x="237" y="983" width="3" height="3"/><rect x="518" y="983" width="3" height="3"/></g>
<circle cx="459.5" cy="778" r="4" fill="#0000ee"/>
</svg>
<div class="a" style="left:1331px;top:143px;width:26px;height:27px;background:#d4d4d4;border:1px solid #bdbdbd"></div>
<div class="a" style="left:1364px;top:143px;width:26px;height:27px;background:#d8d8d8;border:1px solid #bdbdbd"></div>
<div class="a" style="left:1397px;top:143px;width:26px;height:27px;background:#cfcfcf;border:1px solid #bdbdbd"></div>
<svg style="left:1333px;top:146px" width="22" height="22"><circle cx="12" cy="10" r="8" fill="#3a3a3a"/><path d="M12 5v1M12 8v7" stroke="#f0a818" stroke-width="2.5"/><path d="M2 19c2-3 6-3 8 0" stroke="#333" stroke-width="2" fill="none"/></svg>
<svg style="left:1366px;top:146px" width="22" height="22"><path d="M6 6l12-4 2 14-12 4z" fill="#f0a818"/><path d="M3 9h8v11H3z" fill="#f4f4f4"/></svg>
<svg style="left:1399px;top:146px" width="22" height="22"><path d="M6 3l4 2 4-2 6 4-2 3-2-1v10H8V9L6 10 4 7z" fill="#bdbdbd"/><rect x="3" y="13" width="6" height="6" fill="#a8a8a8"/></svg>
<svg style="left:1433px;top:145px" width="24" height="24"><path d="M12 1l6 6h-4v5h-4V7H6z" fill="#8a8a8a"/><path d="M2 12v8h20v-8" fill="none" stroke="#8a8a8a" stroke-width="3"/></svg>
<div class="a" style="left:2099px;top:58px;width:6px;height:1291px;background:#2d2d2d;"></div>
<div class="a" style="left:2105px;top:58px;width:448px;height:27px;background:#2a2a2a;"></div>
<svg style="left:2107px;top:66px" width="14" height="12"><path d="M1 3h5V0l5 4.75-5 4.75V6.5H1z" fill="#a0a0a0"/></svg>
<div class="a" style="left:2121px;top:63px;width:2px;height:19px;background:#1c1c1c;"></div>
<div class="t" style="left:2293px;top:64.5px;font-size:14px;color:#c2c2c2;">Fabric</div>
<div class="a" style="left:2395px;top:63px;width:19px;height:18px;background:#2c2c2c;border:1px solid #1c1c1c;border-radius:3px"></div>
<svg style="left:2400px;top:69px" width="9" height="6"><path d="M0 0h9L4.5 6z" fill="#8c8c8c"/></svg>
<div class="a" style="left:2515px;top:63px;width:16px;height:17px;background:#2c2c2c;border:1px solid #1e1e1e;border-radius:2px"></div>
<svg style="left:2517px;top:66px" width="12" height="12"><path d="M1.5 4v7h7M4 8l6-6M6.5 1.5h4v4" fill="none" stroke="#8a8a8a" stroke-width="1.3"/></svg>
<div class="a" style="left:2535px;top:63px;width:16px;height:17px;background:#2c2c2c;border:1px solid #1e1e1e;border-radius:2px"></div>
<svg style="left:2538px;top:66px" width="11" height="11"><path d="M1.5 1.5l8 8M9.5 1.5l-8 8" stroke="#9a9a9a" stroke-width="1.8"/></svg>
<div class="a" style="left:2105px;top:85px;width:448px;height:359px;background:#3d3d3f;"></div>
<div class="a" style="left:2118px;top:98px;width:89px;height:33px;background:#3d3d3f;border:1px solid #5e5e5e"></div>
<div class="t" style="left:2118px;top:107px;width:89px;text-align:center;font-size:14px;color:#d0d0d0">增加</div>
<div class="a" style="left:2220px;top:98px;width:90px;height:33px;background:#3d3d3f;border:1px solid #5e5e5e"></div>
<div class="t" style="left:2220px;top:107px;width:90px;text-align:center;font-size:14px;color:#5e5e5e">复制</div>
<div class="a" style="left:2323px;top:98px;width:89px;height:33px;background:#3d3d3f;border:1px solid #5e5e5e"></div>
<div class="t" style="left:2323px;top:107px;width:89px;text-align:center;font-size:14px;color:#d0d0d0">应用</div>
<div class="a" style="left:2425px;top:98px;width:115px;height:33px;background:#3d3d3f;border:1px solid #5e5e5e"></div>
<div class="t" style="left:2425px;top:107px;width:115px;text-align:center;font-size:14px;color:#d0d0d0">删除未使用的</div>
<div class="a" style="left:2118px;top:144px;width:422px;height:282px;background:#2c2c2c;"></div>
<svg style="left:2150px;top:182px" width="16" height="14"><path d="M2 7l4 4 8-9" fill="none" stroke="#f0c000" stroke-width="3"/></svg>
<div class="a" style="left:2186px;top:168px;width:43px;height:43px;background:#ffffff;"></div>
<div class="t" style="left:2243px;top:183.0px;font-size:14px;color:#e8a21a;">FABRIC 1</div>
<div class="a" style="left:2493px;top:179px;width:20px;height:20px;background:#333;border:1px solid #222"></div>
<svg style="left:2495px;top:181px" width="16" height="16"><path d="M8 2v7M5 6.5l3 3 3-3M3 10v3h10v-3" fill="none" stroke="#8a8a8a" stroke-width="2"/></svg>
<div class="a" style="left:2130px;top:224px;width:398px;height:1px;background:#3a3a3a;"></div>
<div class="a" style="left:2105px;top:444px;width:448px;height:27px;background:#2a2a2a;"></div>
<svg style="left:2107px;top:452px" width="14" height="12"><path d="M1 3h5V0l5 4.75-5 4.75V6.5H1z" fill="#a0a0a0"/></svg>
<div class="a" style="left:2121px;top:449px;width:2px;height:19px;background:#1c1c1c;"></div>
<div class="t" style="left:2266px;top:450.5px;font-size:14px;color:#c2c2c2;">Property Editor</div>
<div class="a" style="left:2395px;top:449px;width:19px;height:18px;background:#2c2c2c;border:1px solid #1c1c1c;border-radius:3px"></div>
<svg style="left:2400px;top:455px" width="9" height="6"><path d="M0 0h9L4.5 6z" fill="#8c8c8c"/></svg>
<div class="a" style="left:2515px;top:449px;width:16px;height:17px;background:#2c2c2c;border:1px solid #1e1e1e;border-radius:2px"></div>
<svg style="left:2517px;top:452px" width="12" height="12"><path d="M1.5 4v7h7M4 8l6-6M6.5 1.5h4v4" fill="none" stroke="#8a8a8a" stroke-width="1.3"/></svg>
<div class="a" style="left:2535px;top:449px;width:16px;height:17px;background:#2c2c2c;border:1px solid #1e1e1e;border-radius:2px"></div>
<svg style="left:2538px;top:452px" width="11" height="11"><path d="M1.5 1.5l8 8M9.5 1.5l-8 8" stroke="#9a9a9a" stroke-width="1.8"/></svg>
<div class="a" style="left:2105px;top:471px;width:448px;height:878px;background:#3d3d3f;"></div>
<svg style="left:2122px;top:495px" width="10" height="7"><path d="M0 0h9L4.5 5z" fill="#7a7a7a"/></svg>
<div class="t" style="left:2141px;top:491.0px;font-size:14px;color:#e8a21a;">信息</div>
<div class="a" style="left:2133px;top:513px;width:353px;height:1px;background:#2e2e2e;"></div>
<div class="t" style="left:2147px;top:521.0px;font-size:14px;color:#c4c4c4;">名字</div>
<div class="a" style="left:2328px;top:516px;width:158px;height:24px;background:#333335;border:1px solid #3b3b3d;border-top-color:#4a4a4c"></div>
<div class="t" style="left:2335px;top:522.0px;font-size:14px;color:#cfcfcf;">Pattern2D_4086</div>
<div class="a" style="left:2118px;top:543px;width:381px;height:1px;background:#2e2e2e;"></div>
<svg style="left:2122px;top:555px" width="10" height="7"><path d="M0 0h9L4.5 5z" fill="#7a7a7a"/></svg>
<div class="t" style="left:2141px;top:551.0px;font-size:14px;color:#e8a21a;">被选择的线</div>
<div class="a" style="left:2133px;top:573px;width:353px;height:1px;background:#2e2e2e;"></div>
<div class="t" style="left:2147px;top:581.0px;font-size:14px;color:#c4c4c4;">2D线段长度</div>
<div class="a" style="left:2369px;top:576px;width:117px;height:24px;background:#333335;border:1px solid #3b3b3d;border-top-color:#4a4a4c"></div>
<div class="t" style="left:2376px;top:582.0px;font-size:14px;color:#6c6c6c;">7560.0mm</div>
<div class="a" style="left:2133px;top:603px;width:353px;height:1px;background:#2e2e2e;"></div>
<div class="t" style="left:2147px;top:611.0px;font-size:14px;color:#c4c4c4;">3D线段长度</div>
<div class="a" style="left:2369px;top:606px;width:117px;height:24px;background:#333335;border:1px solid #3b3b3d;border-top-color:#4a4a4c"></div>
<div class="t" style="left:2376px;top:612.0px;font-size:14px;color:#6c6c6c;">7560.0mm</div>
<div class="a" style="left:2133px;top:633px;width:353px;height:1px;background:#2e2e2e;"></div>
<div class="t" style="left:2147px;top:641.0px;font-size:14px;color:#c4c4c4;">弹性</div>
<div class="a" style="left:2470px;top:642px;width:15px;height:15px;background:#3d3d3f;border:1px solid #6a6a6a;border-radius:2px"></div>
<div class="a" style="left:2133px;top:663px;width:353px;height:1px;background:#2e2e2e;"></div>
<div class="t" style="left:2147px;top:671.0px;font-size:14px;color:#c4c4c4;">粘衬条</div>
<div class="a" style="left:2470px;top:671px;width:15px;height:15px;background:#3d3d3f;border:1px solid #6a6a6a;border-radius:2px"></div>
<div class="a" style="left:2133px;top:693px;width:353px;height:1px;background:#2e2e2e;"></div>
<svg style="left:2137px;top:705px" width="10" height="7"><path d="M0 0h9L4.5 5z" fill="#7a7a7a"/></svg>
<div class="t" style="left:2155px;top:701.0px;font-size:14px;color:#c4c4c4;">边缘弯曲率设定</div>
<div class="a" style="left:2470px;top:701px;width:15px;height:15px;background:#f5c400;border-radius:2px"></div>
<svg style="left:2471px;top:702px" width="13" height="13"><path d="M2 6l3 4 6-8" fill="none" stroke="#222" stroke-width="1.6"/></svg>
<div class="a" style="left:2148px;top:723px;width:338px;height:1px;background:#2e2e2e;"></div>
<div class="t" style="left:2162px;top:742.0px;font-size:14px;color:#c4c4c4;">弯曲率(%)</div>
<div class="a" style="left:2369px;top:726px;width:117px;height:24px;background:#333335;border:1px solid #3b3b3d;border-top-color:#4a4a4c"></div>
<div class="t" style="left:2376px;top:732.0px;font-size:14px;color:#cfcfcf;">100</div>
<div class="a" style="left:2374px;top:760px;width:106px;height:4px;background:#f5c400;"></div>
<svg style="left:2474px;top:754px" width="12" height="16"><path d="M1 4l5-4 5 4v11H1z" fill="#c8c8c8" stroke="#555"/></svg>
<div class="a" style="left:2148px;top:776px;width:338px;height:1px;background:#2e2e2e;"></div>
<div class="t" style="left:2162px;top:785.0px;font-size:14px;color:#c4c4c4;">双层表现</div>
<div class="a" style="left:2470px;top:785px;width:15px;height:15px;background:#3d3d3f;border:1px solid #6a6a6a;border-radius:2px"></div>
<div class="a" style="left:2118px;top:807px;width:381px;height:1px;background:#2e2e2e;"></div>
<svg style="left:2122px;top:819px" width="10" height="7"><path d="M0 0h9L4.5 5z" fill="#7a7a7a"/></svg>
<div class="t" style="left:2141px;top:815.0px;font-size:14px;color:#e8a21a;">模拟属性</div>
<div class="a" style="left:2133px;top:837px;width:353px;height:1px;background:#2e2e2e;"></div>
<div class="t" style="left:2147px;top:845.0px;font-size:14px;color:#c4c4c4;">粒子间距 (毫米)</div>
<div class="a" style="left:2369px;top:840px;width:117px;height:24px;background:#333335;border:1px solid #3b3b3d;border-top-color:#4a4a4c"></div>
<div class="t" style="left:2376px;top:846.0px;font-size:14px;color:#cfcfcf;">20.0</div>
<div class="a" style="left:2133px;top:867px;width:353px;height:1px;background:#2e2e2e;"></div>
<div class="t" style="left:2147px;top:875.0px;font-size:14px;color:#c4c4c4;">层</div>
<div class="a" style="left:2369px;top:870px;width:117px;height:24px;background:#333335;border:1px solid #3b3b3d;border-top-color:#4a4a4c"></div>
<div class="t" style="left:2376px;top:876.0px;font-size:14px;color:#cfcfcf;">0</div>
<div class="a" style="left:2133px;top:897px;width:353px;height:1px;background:#2e2e2e;"></div>
<div class="t" style="left:2147px;top:905.0px;font-size:14px;color:#c4c4c4;">纬向缩率 (%)</div>
<div class="a" style="left:2369px;top:900px;width:117px;height:24px;background:#333335;border:1px solid #3b3b3d;border-top-color:#4a4a4c"></div>
<div class="t" style="left:2376px;top:906.0px;font-size:14px;color:#cfcfcf;">100.00</div>
<div class="a" style="left:2133px;top:927px;width:353px;height:1px;background:#2e2e2e;"></div>
<div class="t" style="left:2147px;top:935.0px;font-size:14px;color:#c4c4c4;">经向缩率 (%)</div>
<div class="a" style="left:2369px;top:930px;width:117px;height:24px;background:#333335;border:1px solid #3b3b3d;border-top-color:#4a4a4c"></div>
<div class="t" style="left:2376px;top:936.0px;font-size:14px;color:#cfcfcf;">100.00</div>
<div class="a" style="left:2133px;top:957px;width:353px;height:1px;background:#2e2e2e;"></div>
<div class="t" style="left:2147px;top:965.0px;font-size:14px;color:#c4c4c4;">增加厚度－冲突（毫米）</div>
<div class="a" style="left:2369px;top:960px;width:117px;height:24px;background:#333335;border:1px solid #3b3b3d;border-top-color:#4a4a4c"></div>
<div class="t" style="left:2376px;top:966.0px;font-size:14px;color:#cfcfcf;">2.5</div>
<div class="a" style="left:2133px;top:987px;width:353px;height:1px;background:#2e2e2e;"></div>
<div class="t" style="left:2147px;top:995.0px;font-size:14px;color:#c4c4c4;">增加厚度－渲染（毫米）</div>
<div class="a" style="left:2369px;top:990px;width:117px;height:24px;background:#333335;border:1px solid #3b3b3d;border-top-color:#4a4a4c"></div>
<div class="t" style="left:2376px;top:996.0px;font-size:14px;color:#cfcfcf;">0.0</div>
<div class="a" style="left:2133px;top:1017px;width:353px;height:1px;background:#2e2e2e;"></div>
<svg style="left:2139px;top:1038px" width="7" height="10"><path d="M0 0v9l5-4.5z" fill="#6a6a6a"/></svg>
<div class="t" style="left:2156px;top:1036.0px;font-size:14px;color:#c4c4c4;">压力</div>
<div class="a" style="left:2369px;top:1020px;width:117px;height:24px;background:#333335;border:1px solid #3b3b3d;border-top-color:#4a4a4c"></div>
<div class="t" style="left:2376px;top:1026.0px;font-size:14px;color:#cfcfcf;">0</div>
<div class="a" style="left:2374px;top:1055px;width:56px;height:4px;background:#f5c400;"></div>
<div class="a" style="left:2430px;top:1056px;width:56px;height:1px;background:#262626;"></div>
<svg style="left:2424px;top:1048px" width="12" height="16"><path d="M1 4l5-4 5 4v11H1z" fill="#c8c8c8" stroke="#555"/></svg>
<div class="a" style="left:2118px;top:1070px;width:381px;height:1px;background:#2e2e2e;"></div>
<svg style="left:2122px;top:1082px" width="10" height="7"><path d="M0 0h9L4.5 5z" fill="#7a7a7a"/></svg>
<div class="t" style="left:2141px;top:1078.0px;font-size:14px;color:#e8a21a;">织物</div>
<div class="a" style="left:2133px;top:1100px;width:353px;height:1px;background:#2e2e2e;"></div>
<div class="t" style="left:2147px;top:1108.0px;font-size:14px;color:#c4c4c4;">织物</div>
<div class="a" style="left:2344px;top:1104px;width:142px;height:24px;background:#2e2e30;border:1px solid #3a3a3c"></div>
<div class="a" style="left:2350px;top:1105px;width:23px;height:23px;background:#ffffff;"></div>
<div class="t" style="left:2381px;top:1109.0px;font-size:14px;color:#cfcfcf;">FABRIC 1</div>
<div class="a" style="left:2466px;top:1106px;width:19px;height:20px;background:#2a2a2a;border:1px solid #1e1e1e;border-radius:3px"></div>
<svg style="left:2471px;top:1113px" width="9" height="6"><path d="M0 0h9L4.5 6z" fill="#9a9a9a"/></svg>
<div class="a" style="left:2133px;top:1130px;width:353px;height:1px;background:#2e2e2e;"></div>
<div class="t" style="left:2147px;top:1139.0px;font-size:14px;color:#c4c4c4;">纱线方向</div>
<div class="a" style="left:2369px;top:1134px;width:117px;height:24px;background:#333335;border:1px solid #3b3b3d;border-top-color:#4a4a4c"></div>
<div class="t" style="left:2376px;top:1140.0px;font-size:14px;color:#cfcfcf;">0.0</div>
<div class="a" style="left:2118px;top:1160px;width:381px;height:1px;background:#2e2e2e;"></div>
<svg style="left:2124px;top:1170px" width="7" height="10"><path d="M0 0v9l5-4.5z" fill="#6a6a6a"/></svg>
<div class="t" style="left:2141px;top:1168.0px;font-size:14px;color:#e8a21a;">粘衬／削薄</div>
<div class="a" style="left:2118px;top:1190px;width:381px;height:1px;background:#2e2e2e;"></div>
<div class="t" style="left:2132px;top:1199.0px;font-size:14px;color:#e8a21a;">形态固化</div>
<div class="a" style="left:2470px;top:1199px;width:15px;height:15px;background:#3d3d3f;border:1px solid #6a6a6a;border-radius:2px"></div>
<div class="a" style="left:2118px;top:1220px;width:381px;height:1px;background:#2e2e2e;"></div>
<svg style="left:2122px;top:1232px" width="10" height="7"><path d="M0 0h9L4.5 5z" fill="#7a7a7a"/></svg>
<div class="t" style="left:2141px;top:1228.0px;font-size:14px;color:#e8a21a;">安排</div>
<div class="a" style="left:2133px;top:1250px;width:353px;height:1px;background:#2e2e2e;"></div>
<div class="t" style="left:2147px;top:1258.0px;font-size:14px;color:#c4c4c4;">点名称</div>
<div class="a" style="left:2344px;top:1254px;width:142px;height:24px;background:#2e2e30;border:1px solid #3a3a3c"></div>
<div class="t" style="left:2350px;top:1259.0px;font-size:14px;color:#cfcfcf;">not assigned</div>
<div class="a" style="left:2466px;top:1256px;width:19px;height:20px;background:#2a2a2a;border:1px solid #1e1e1e;border-radius:3px"></div>
<svg style="left:2471px;top:1263px" width="9" height="6"><path d="M0 0h9L4.5 6z" fill="#9a9a9a"/></svg>
<div class="a" style="left:2133px;top:1280px;width:353px;height:1px;background:#2e2e2e;"></div>
<div class="t" style="left:2147px;top:1288.0px;font-size:14px;color:#c4c4c4;">图形类型</div>
<div class="a" style="left:2344px;top:1284px;width:142px;height:24px;background:#2e2e30;border:1px solid #3a3a3c"></div>
<div class="t" style="left:2350px;top:1289.0px;font-size:14px;color:#cfcfcf;">曲面</div>
<div class="a" style="left:2466px;top:1286px;width:19px;height:20px;background:#2a2a2a;border:1px solid #1e1e1e;border-radius:3px"></div>
<svg style="left:2471px;top:1293px" width="9" height="6"><path d="M0 0h9L4.5 6z" fill="#9a9a9a"/></svg>
<div class="a" style="left:2133px;top:1310px;width:353px;height:1px;background:#2e2e2e;"></div>
<div class="a" style="left:2118px;top:1311px;width:380px;height:24px;overflow:hidden"><div class="t" style="left:29px;top:16px;font-size:14px;color:#c4c4c4">X轴的位置</div></div>
<div class="a" style="left:2369px;top:1314px;width:117px;height:21px;background:#333335;border:1px solid #3b3b3d;border-top-color:#4a4a4c"></div>
<div class="t" style="left:2376px;top:1318.5px;font-size:14px;color:#cfcfcf;">50</div>
<div class="a" style="left:2511px;top:485px;width:22px;height:848px;background:#2b2b2b;border-radius:4px"></div>
<div class="a" style="left:2511px;top:505px;width:22px;height:623px;background:#333335;border:1px solid #2a2a2a;border-radius:3px"></div>
<div class="a" style="left:2511px;top:485px;width:22px;height:20px;background:#2f2f31;border:1px solid #262626;border-radius:4px"></div>
<svg style="left:2517px;top:491px" width="10" height="7"><path d="M0 6h9L4.5 0z" fill="#7a7a7a"/></svg>
<div class="a" style="left:2511px;top:1313px;width:22px;height:20px;background:#2f2f31;border:1px solid #262626;border-radius:4px"></div>
<svg style="left:2517px;top:1320px" width="10" height="7"><path d="M0 0h9L4.5 6z" fill="#1e1e1e"/></svg>
<svg style="left:2517px;top:813px" width="9" height="8"><path d="M0 1h9M0 4h9M0 7h9" stroke="#888" stroke-width="1"/></svg>
<div class="a" style="left:45px;top:1348px;width:2508px;height:2px;background:#303032;"></div>
<div class="a" style="left:45px;top:1350px;width:2508px;height:1px;background:#646466;"></div>
<div class="a" style="left:45px;top:1351px;width:2508px;height:40px;background:#3d3d3f;"></div>
<div class="t" style="left:60px;top:1363.0px;font-size:14px;color:#b4b4b4;">Version:</div>
<div class="t" style="left:126px;top:1363.0px;font-size:14px;color:#b4b4b4;">6.1.601 (r37223)</div>
<div class="t" style="left:241px;top:1363.0px;font-size:14px;color:#b4b4b4;">Untitled</div>
<svg style="left:1321px;top:1363px" width="17" height="16"><path d="M8.5 1L16 12H1z" fill="#8a8a8a"/><path d="M1 12h15l-1 3H2z" fill="#2a2a2a"/></svg>
<svg style="left:2372px;top:1359px" width="23" height="23"><rect x="1.5" y="1.5" width="19" height="19" rx="2" fill="none" stroke="#888" stroke-width="1.5"/><rect x="1.5" y="1.5" width="19" height="3" fill="#888"/></svg>
<svg style="left:2408px;top:1359px" width="23" height="23"><rect x="1.5" y="1.5" width="8" height="19" rx="2" fill="none" stroke="#888" stroke-width="1.5"/><rect x="12.5" y="1.5" width="8" height="19" rx="2" fill="none" stroke="#888" stroke-width="1.5"/></svg>
<svg style="left:2445px;top:1359px" width="23" height="23"><rect x="1.5" y="1.5" width="8" height="19" rx="2" fill="none" stroke="#888" stroke-width="1.5"/><rect x="12.5" y="1.5" width="8" height="8" rx="2" fill="none" stroke="#888" stroke-width="1.5"/><rect x="12.5" y="12.5" width="8" height="8" rx="2" fill="none" stroke="#888" stroke-width="1.5"/></svg>
<svg style="left:2481px;top:1359px" width="23" height="23"><rect x="1.5" y="1.5" width="8" height="8" rx="2" fill="none" stroke="#888" stroke-width="1.5"/><rect x="12.5" y="1.5" width="8" height="8" rx="2" fill="none" stroke="#888" stroke-width="1.5"/><rect x="1.5" y="12.5" width="8" height="8" rx="2" fill="none" stroke="#888" stroke-width="1.5"/><rect x="12.5" y="12.5" width="8" height="8" rx="2" fill="none" stroke="#888" stroke-width="1.5"/></svg>
<svg style="left:2517px;top:1359px" width="23" height="23"><rect x="1.5" y="1.5" width="19" height="19" rx="2" fill="none" stroke="#888" stroke-width="1.5"/><rect x="1.5" y="1.5" width="19" height="3" fill="#888"/><path d="M14 9a4 4 0 1 1-1.5-1.5" fill="none" stroke="#888" stroke-width="1.2"/></svg>
<div class="a" style="left:1014px;top:0;width:309px;height:927px;background:#2b2b2b;box-shadow:3px 3px 4px rgba(0,0,0,.35)"></div>
<div class="t" style="left:1040px;top:7.5px;font-size:15px;color:#4e4e4e;">板片</div>
<div class="t" style="left:1056px;top:32.5px;font-size:15px;color:#d8d8d8;">复制</div>
<div class="t" style="left:1250px;top:32.5px;font-size:15px;color:#d8d8d8;">Ctrl+C</div>
<div class="t" style="left:1056px;top:57.5px;font-size:15px;color:#d8d8d8;">粘贴</div>
<div class="t" style="left:1250px;top:57.5px;font-size:15px;color:#d8d8d8;">Ctrl+V</div>
<div class="t" style="left:1056px;top:82.5px;font-size:15px;color:#d8d8d8;">镜像粘贴</div>
<div class="t" style="left:1250px;top:82.5px;font-size:15px;color:#d8d8d8;">Ctrl+R</div>
<div class="a" style="left:1043px;top:104px;width:264px;height:1px;background:#1c1c1c;"></div>
<div class="a" style="left:1043px;top:105px;width:264px;height:1px;background:#353535;"></div>
<div class="t" style="left:1056px;top:110.5px;font-size:15px;color:#d8d8d8;">反激活（版片）</div>
<div class="t" style="left:1250px;top:110.5px;font-size:15px;color:#d8d8d8;">Ctrl+J</div>
<div class="t" style="left:1056px;top:135.5px;font-size:15px;color:#d8d8d8;">反激活（版片和缝纫线）</div>
<div class="t" style="left:1056px;top:160.5px;font-size:15px;color:#d8d8d8;">冷冻</div>
<div class="t" style="left:1250px;top:160.5px;font-size:15px;color:#d8d8d8;">Ctrl+K</div>
<div class="t" style="left:1056px;top:185.5px;font-size:15px;color:#d8d8d8;">硬化</div>
<div class="t" style="left:1250px;top:185.5px;font-size:15px;color:#d8d8d8;">Ctrl+H</div>
<div class="t" style="left:1056px;top:210.5px;font-size:15px;color:#d8d8d8;">形态固化</div>
<div class="t" style="left:1056px;top:235.5px;font-size:15px;color:#d8d8d8;">四方格</div>
<div class="t" style="left:1056px;top:260.5px;font-size:15px;color:#d8d8d8;">三角形</div>
<div class="a" style="left:1043px;top:282px;width:264px;height:1px;background:#1c1c1c;"></div>
<div class="a" style="left:1043px;top:283px;width:264px;height:1px;background:#353535;"></div>
<div class="t" style="left:1056px;top:287.5px;font-size:15px;color:#d8d8d8;">重置网格</div>
<div class="t" style="left:1056px;top:312.5px;font-size:15px;color:#d8d8d8;">重置网格并重拓扑（选择的）</div>
<div class="a" style="left:1043px;top:335px;width:264px;height:1px;background:#1c1c1c;"></div>
<div class="a" style="left:1043px;top:336px;width:264px;height:1px;background:#353535;"></div>
<div class="t" style="left:1056px;top:340.5px;font-size:15px;color:#f0a020;">表面翻转</div>
<div class="a" style="left:1043px;top:361px;width:264px;height:1px;background:#1c1c1c;"></div>
<div class="a" style="left:1043px;top:362px;width:264px;height:1px;background:#353535;"></div>
<div class="t" style="left:1040px;top:367.5px;font-size:15px;color:#d8d8d8;">删除归拔</div>
<svg style="left:1300px;top:370px" width="7" height="11"><path d="M0 0v10l6-5z" fill="#d8d8d8"/></svg>
<div class="t" style="left:1040px;top:392.5px;font-size:15px;color:#d8d8d8;">固定针</div>
<svg style="left:1300px;top:395px" width="7" height="11"><path d="M0 0v10l6-5z" fill="#d8d8d8"/></svg>
<div class="t" style="left:1040px;top:417.5px;font-size:15px;color:#d8d8d8;">细分</div>
<svg style="left:1300px;top:420px" width="7" height="11"><path d="M0 0v10l6-5z" fill="#d8d8d8"/></svg>
<div class="t" style="left:1040px;top:442.5px;font-size:15px;color:#d8d8d8;">部分冷冻</div>
<svg style="left:1300px;top:445px" width="7" height="11"><path d="M0 0v10l6-5z" fill="#d8d8d8"/></svg>
<div class="t" style="left:1040px;top:467.5px;font-size:15px;color:#d8d8d8;">部分形态固化</div>
<svg style="left:1300px;top:470px" width="7" height="11"><path d="M0 0v10l6-5z" fill="#d8d8d8"/></svg>
<div class="a" style="left:1043px;top:490px;width:264px;height:1px;background:#1c1c1c;"></div>
<div class="a" style="left:1043px;top:491px;width:264px;height:1px;background:#353535;"></div>
<div class="t" style="left:1040px;top:495.5px;font-size:15px;color:#4e4e4e;">安排</div>
<div class="t" style="left:1056px;top:520.5px;font-size:15px;color:#d8d8d8;">重设2D安排位置 (选择的)</div>
<div class="t" style="left:1056px;top:545.5px;font-size:15px;color:#d8d8d8;">重置3D安排位置 (选定的)</div>
<div class="t" style="left:1250px;top:545.5px;font-size:15px;color:#d8d8d8;">Ctrl+F</div>
<div class="t" style="left:1056px;top:570.5px;font-size:15px;color:#d8d8d8;">移动到缝合的版片</div>
<div class="t" style="left:1056px;top:595.5px;font-size:15px;color:#d8d8d8;">移动到地面中心</div>
<div class="t" style="left:1056px;top:620.5px;font-size:15px;color:#d8d8d8;">水平翻转</div>
<div class="t" style="left:1250px;top:620.5px;font-size:15px;color:#d8d8d8;">Ctrl+G</div>
<div class="t" style="left:1056px;top:645.5px;font-size:15px;color:#d8d8d8;">垂直翻转</div>
<div class="t" style="left:1056px;top:670.5px;font-size:15px;color:#d8d8d8;">反向安排</div>
<svg style="left:1300px;top:673px" width="7" height="11"><path d="M0 0v10l6-5z" fill="#d8d8d8"/></svg>
<div class="t" style="left:1056px;top:695.5px;font-size:15px;color:#4e4e4e;">往包裹的方向翻转</div>
<div class="a" style="left:1043px;top:717px;width:264px;height:1px;background:#1c1c1c;"></div>
<div class="a" style="left:1043px;top:718px;width:264px;height:1px;background:#353535;"></div>
<div class="t" style="left:1056px;top:722.5px;font-size:15px;color:#4e4e4e;">添加到外面</div>
<div class="t" style="left:1250px;top:722.5px;font-size:15px;color:#4e4e4e;">Ctrl+[</div>
<div class="t" style="left:1056px;top:747.5px;font-size:15px;color:#4e4e4e;">添加到里面</div>
<div class="t" style="left:1250px;top:747.5px;font-size:15px;color:#4e4e4e;">Ctrl+]</div>
<div class="t" style="left:1056px;top:772.5px;font-size:15px;color:#4e4e4e;">添加到侧面</div>
<div class="a" style="left:1043px;top:794px;width:264px;height:1px;background:#1c1c1c;"></div>
<div class="a" style="left:1043px;top:795px;width:264px;height:1px;background:#353535;"></div>
<div class="t" style="left:1040px;top:800.5px;font-size:15px;color:#d8d8d8;">隐藏3D版片</div>
<div class="t" style="left:1250px;top:800.5px;font-size:15px;color:#d8d8d8;">Shift+Q</div>
<div class="t" style="left:1040px;top:825.5px;font-size:15px;color:#d8d8d8;">隐藏所有3D版片</div>
<div class="t" style="left:1250px;top:825.5px;font-size:15px;color:#d8d8d8;">Shift+C</div>
<div class="t" style="left:1040px;top:850.5px;font-size:15px;color:#d8d8d8;">刷新图案</div>
<div class="t" style="left:1250px;top:850.5px;font-size:15px;color:#d8d8d8;">F5</div>
<div class="a" style="left:1043px;top:872px;width:264px;height:1px;background:#1c1c1c;"></div>
<div class="a" style="left:1043px;top:873px;width:264px;height:1px;background:#353535;"></div>
<div class="t" style="left:1040px;top:877.5px;font-size:15px;color:#d8d8d8;">对焦</div>
<div class="t" style="left:1250px;top:877.5px;font-size:15px;color:#d8d8d8;">F</div>
<div class="t" style="left:1040px;top:902.5px;font-size:15px;color:#d8d8d8;">变焦至全景</div>
<div class="a" style="left:1041px;top:330px;width:166px;height:37px;border:3px solid #e8202a"></div>
<svg style="left:1230px;top:340px" width="130" height="50"><path d="M115.8 40.6L22 18.6" stroke="#e8202a" stroke-width="5" stroke-linecap="round"/><path d="M11.4 14.8L29.5 11.2 21.7 18.7 25.6 26.8z" fill="#e8202a"/></svg>
</body></html>
